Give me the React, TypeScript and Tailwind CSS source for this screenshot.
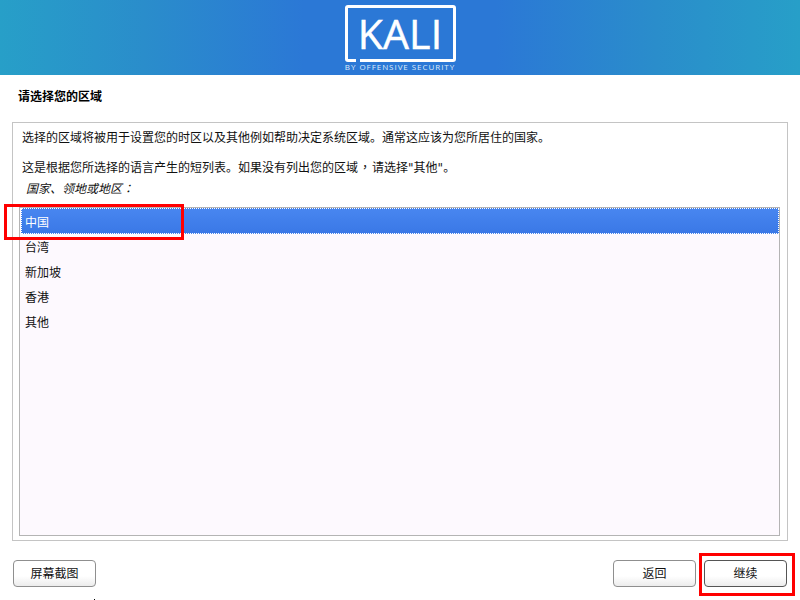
export default function App() {
  const rows = ["台湾", "新加坡", "香港", "其他"];
  const font = { fontFamily: '"Liberation Sans", "Noto Sans CJK SC", sans-serif' };
  const tc = { fontFamily: '"Noto Sans CJK TC", sans-serif', lineHeight: "1px" };
  const dv = { fontFamily: '"DejaVu Sans", sans-serif', lineHeight: "1px" };
  return (
    <div className="relative w-[800px] h-[600px] overflow-hidden bg-white text-[12px] text-[#111]" style={font}>
      <header className="h-[75px] flex justify-center bg-[linear-gradient(90deg,#279fc8_0%,#2a8dcb_18%,#2b78d6_38%,#2b78d6_62%,#2a8dcb_82%,#279fc8_100%)]">
        <div className="w-[112px] flex flex-col items-center pt-[5px]">
          <div className="relative w-[111px] h-[57px] shrink-0 rounded-[3px] border-[3px] border-white flex items-center justify-center">
            <span className="text-white text-[41px] leading-none font-medium tracking-[0.2px] [-webkit-text-stroke:0.5px_white]" style={{ fontFamily: '"Open Sans", sans-serif' }}>KALI</span>
            <span className="absolute left-[8px] bottom-[-3px] w-[4px] h-[3px] bg-[#2b78d6]" />
          </div>
          <span className="mt-[0px] text-[8px] leading-[10px] font-medium tracking-[0.95px] whitespace-nowrap text-[#dfeaf8]" style={{ fontFamily: '"Open Sans", sans-serif' }}>BY OFFENSIVE SECURITY</span>
        </div>
      </header>

      <h1 className="pl-[18px] pt-[14px] h-[47px] text-[12px] leading-[17px] font-bold text-black">请选择您的区域</h1>

      <main className="mx-[12px] w-[776px] h-[419px] border border-[#c4c4c4] px-[6px] flex flex-col">
        <p className="pl-[3px] pt-[7px] h-[31px] leading-[17px]">选择的区域将被用于设置您的时区以及其他例如帮助决定系统区域。通常这应该为您所居住的国家。</p>
        <p className="pl-[3px] mt-[6px] h-[20px] leading-[17px]">这是根据您所选择的语言产生的短列表。如果没有列出您的区域<span className="mx-[1px]" style={tc}>，</span>请选择<span style={dv}>"</span>其他<span style={dv}>"</span>。</p>
        <p className="pl-[7px] pt-[1px] h-[27px] leading-[17px] italic">国家、领地或地区<span style={tc}>：</span></p>
        <div className="h-[329px] w-[761px] border border-[#b4b4b4] bg-[#fdf9fe] flex flex-col pl-[1px]">
          <div className="h-[26px] pl-[3px] pt-[3px] flex items-center text-white border border-dotted border-white bg-[linear-gradient(180deg,#4886f0,#3a78e6)]">中国</div>
          {rows.map((r) => (
            <div key={r} className="h-[25px] pl-[4px] pt-[2px] flex items-center">{r}</div>
          ))}
        </div>
      </main>

      <footer className="mt-[19px] px-[13px] flex items-center justify-between">
        <button className="w-[83px] h-[27px] rounded-[4px] border border-[#8f8f8f] bg-[linear-gradient(180deg,#ffffff_60%,#ececec)] text-[12px]">屏幕截图</button>
        <div className="flex gap-[8px]">
          <button className="w-[83px] h-[27px] rounded-[4px] border border-[#8f8f8f] bg-[linear-gradient(180deg,#ffffff_60%,#ececec)] text-[12px]">返回</button>
          <button className="w-[83px] h-[27px] rounded-[4px] border border-[#555] bg-[linear-gradient(180deg,#ffffff_60%,#ececec)] text-[12px]">继续</button>
        </div>
      </footer>

      <div className="absolute left-[4px] top-[204px] w-[180px] h-[36px] border-[3px] border-[#f00]" />
      <div className="absolute left-[699px] top-[553px] w-[96px] h-[43px] border-[3px] border-[#f00]" />
      <div className="absolute left-[94px] top-[599px] w-[1px] h-[1px] bg-black" />
    </div>
  );
}
